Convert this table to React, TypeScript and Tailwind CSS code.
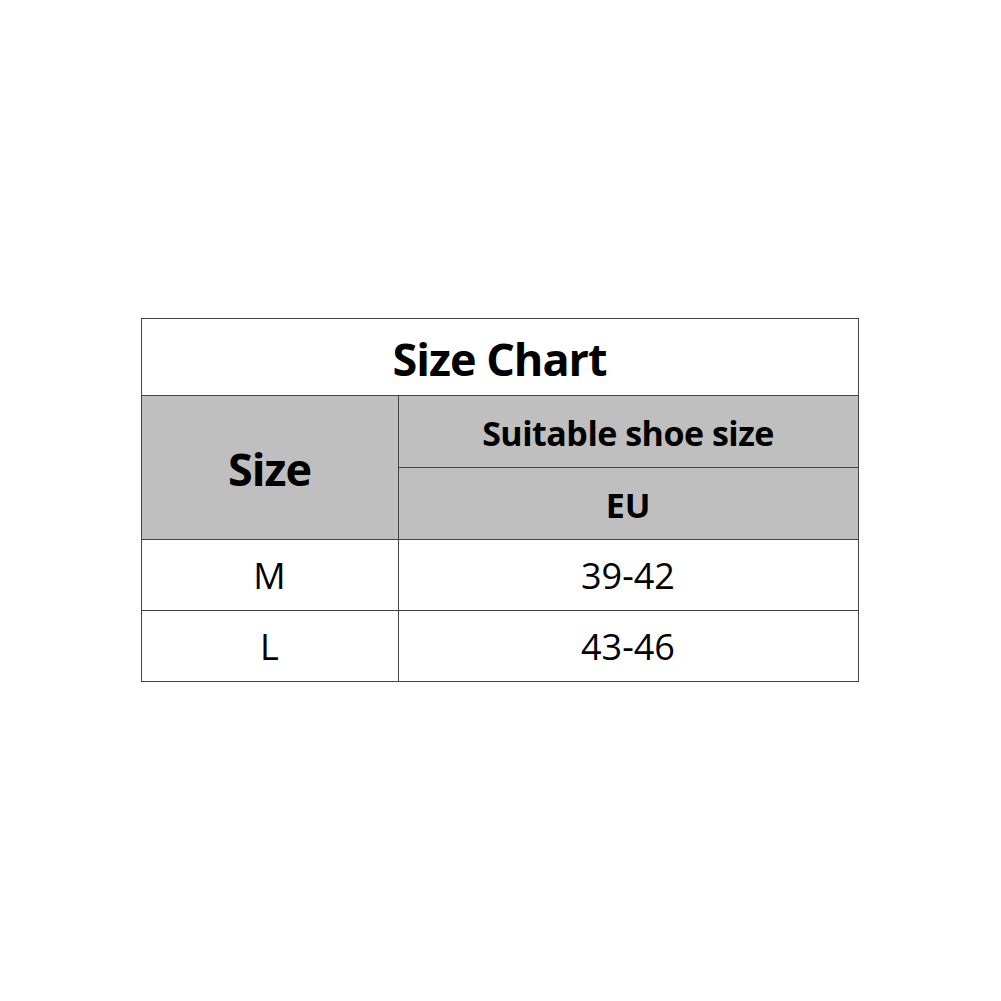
export default function App() {
  const font = { fontFamily: '"Open Sans", "Liberation Sans", sans-serif' };
  return (
    <div className="w-[1001px] h-[1001px] bg-white flex items-center justify-center" style={font}>
      <table className="border-collapse text-black mt-[-2px] ml-[-2px]">
        <tbody>
          <tr>
            <td colSpan={2} className="border border-[#444] h-[77px] pt-[3px] text-center align-middle text-[45px] leading-none font-bold tracking-[-1px]">
              Size Chart
            </td>
          </tr>
          <tr className="bg-[#bfbfbf]">
            <td rowSpan={2} className="border border-[#444] w-[257px] pt-[3px] text-center text-[45px] leading-none font-bold tracking-[-1px]">
              Size
            </td>
            <td className="border border-[#444] w-[460px] h-[72px] pt-[3px] text-center text-[34px] leading-none font-bold tracking-[-0.5px]">
              Suitable shoe size
            </td>
          </tr>
          <tr className="bg-[#bfbfbf]">
            <td className="border border-[#444] h-[72px] pt-[3px] text-center text-[34px] leading-none font-bold">EU</td>
          </tr>
          <tr>
            <td className="border border-[#444] h-[71px] pt-[3px] text-center text-[36px] leading-none">M</td>
            <td className="border border-[#444] h-[71px] pt-[3px] text-center text-[36px] leading-none">39-42</td>
          </tr>
          <tr>
            <td className="border border-[#444] h-[71px] pt-[3px] text-center text-[36px] leading-none">L</td>
            <td className="border border-[#444] h-[71px] pt-[3px] text-center text-[36px] leading-none">43-46</td>
          </tr>
        </tbody>
      </table>
    </div>
  );
}
